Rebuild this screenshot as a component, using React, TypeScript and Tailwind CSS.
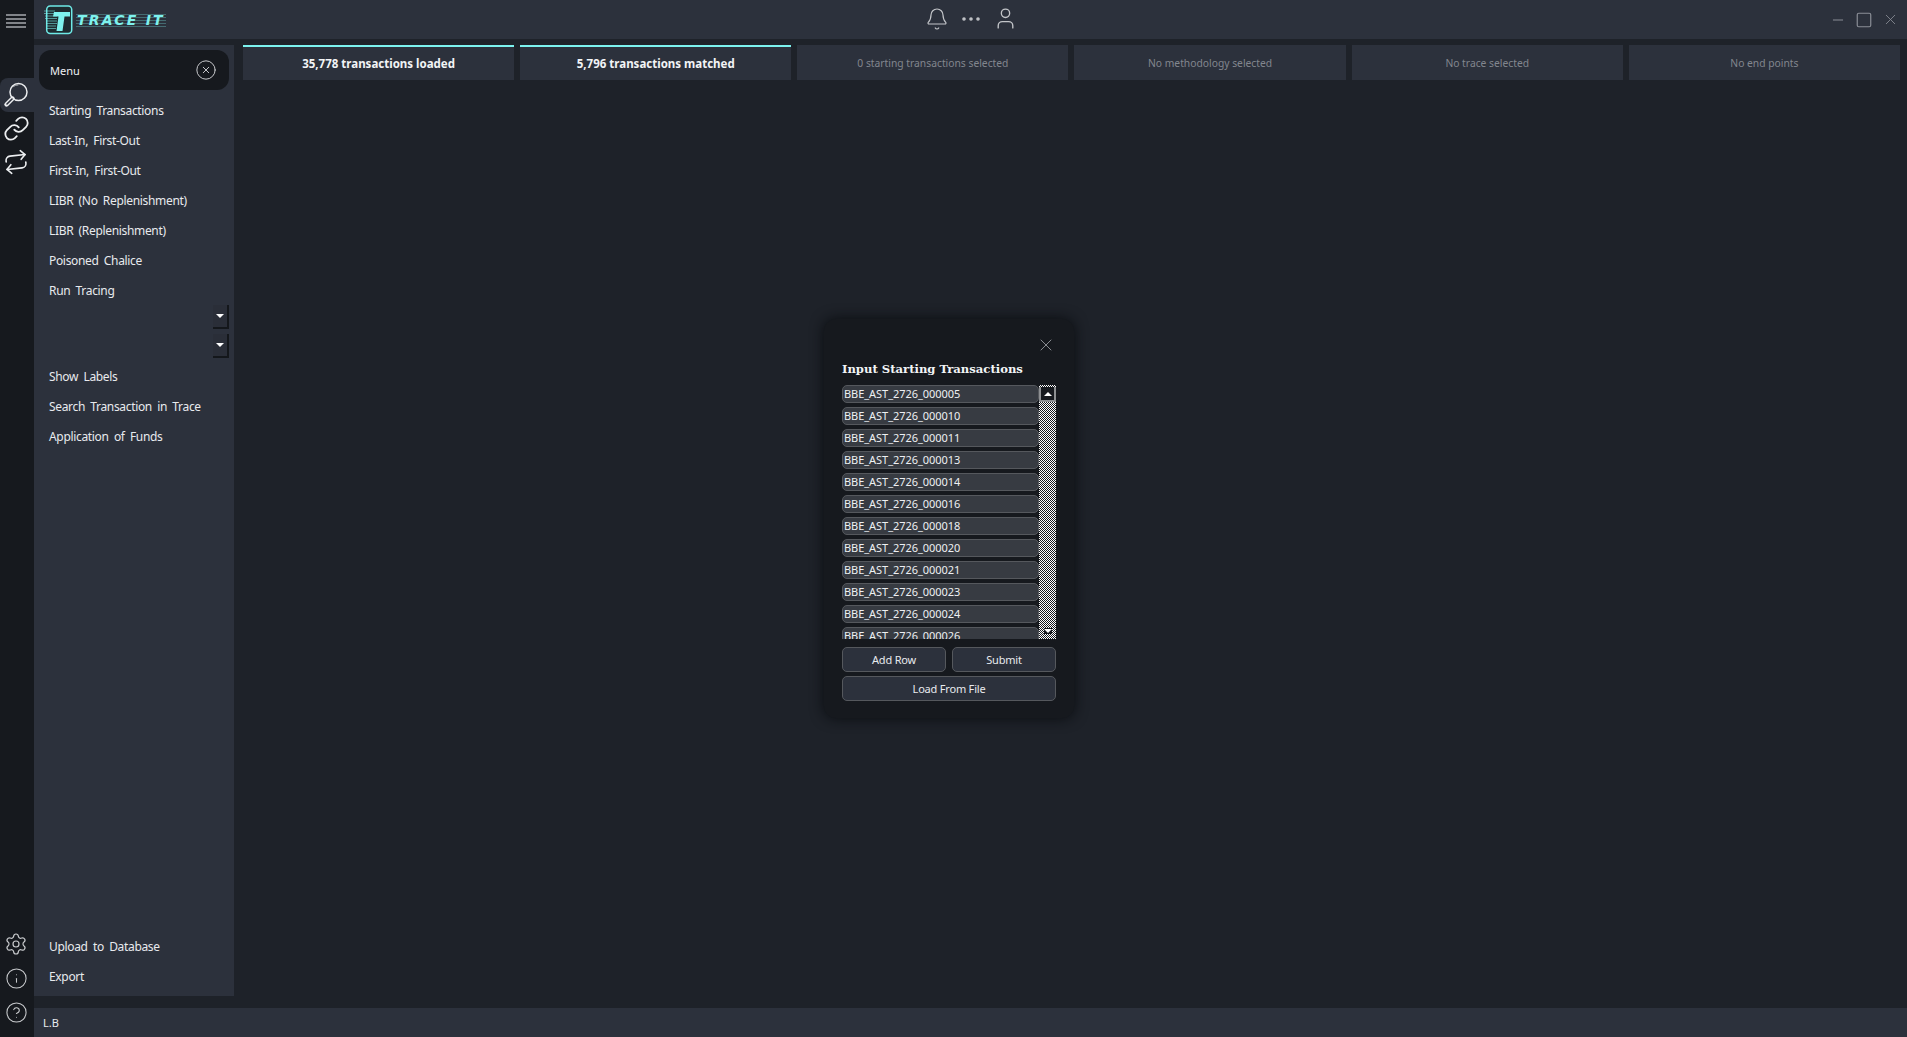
import React from "react";
import { Bell, Ellipsis, Link, Repeat, Settings, Info, CircleHelp, X, Minus, Square, User, CircleX } from "lucide-react";

const menuTop = ["Starting Transactions", "Last-In, First-Out", "First-In, First-Out", "LIBR (No Replenishment)", "LIBR (Replenishment)", "Poisoned Chalice", "Run Tracing"];
const menuMid = ["Show Labels", "Search Transaction in Trace", "Application of Funds"];
const tabs = [
  { t: "35,778 transactions loaded", on: true },
  { t: "5,796 transactions matched", on: true },
  { t: "0 starting transactions selected", on: false },
  { t: "No methodology selected", on: false },
  { t: "No trace selected", on: false },
  { t: "No end points", on: false },
];
const rows = ["000005", "000010", "000011", "000013", "000014", "000016", "000018", "000020", "000021", "000023", "000024", "000026"];

function MenuItem({ label }: { label: string }) {
  return <div className="h-[30px] flex items-center pl-[15px] text-[12px] tracking-[-0.33px] [word-spacing:2.5px] text-[#e8eaee]">{label}</div>;
}

function Drop() {
  return (
    <div className="w-[16px] h-[24px] bg-[#2a2e38] border-r-2 border-b-2 border-[#14171b] flex items-center justify-center">
      <div className="w-0 h-0 border-x-[4px] border-x-transparent border-t-[4px] border-t-white" />
    </div>
  );
}

function Logo() {
  return (
    <div className="flex items-center ml-[10px]">
      <svg width="30" height="30" viewBox="0 0 30 30" fill="none">
        <rect x="2.7" y="1" width="25" height="27.5" rx="3.5" stroke="#6ee9e6" strokeWidth="1.5" fill="#1e2b30" />
        <path d="M10 7H26V11.5H20.5L18.5 26H12.5L14.5 11.5H9Z" fill="#7ef2ee" />
        <path d="M0 6H11M0 8.5H12M1 11H13M1 13.5H13M2 16H13M2 18.5H13M3 21H12M3 23.5H12" stroke="#7ef2ee" strokeWidth="1" opacity="0.55" />
      </svg>
      <span className="ml-[2px] px-[1px] leading-[14px] text-[14px] font-bold italic tracking-[2.2px] text-[#7ef2ee] font-['DejaVu_Sans',sans-serif] bg-[repeating-linear-gradient(0deg,rgba(126,242,238,0.3)_0_1px,transparent_1px_3px)]">TRACE IT</span>
    </div>
  );
}

function Hamburger() {
  return (
    <svg width="20" height="14" viewBox="0 0 20 14" stroke="#a5a8ad" strokeWidth="1.6">
      <path d="M0 1H20M0 5H20M0 9H20M0 13H20" />
    </svg>
  );
}

function SearchIcon() {
  return (
    <svg width="26" height="26" viewBox="0 0 26 26" fill="none" strokeLinecap="round">
      <circle cx="15.5" cy="10" r="8.5" stroke="#eceef0" strokeWidth="1.5" />
      <path d="M10.5 4.5A7 7 0 0 1 15 3" stroke="#eceef0" strokeWidth="0.6" />
      <path d="M9.5 16.5L3.5 22.5" stroke="#eceef0" strokeWidth="4.4" />
      <path d="M9 17L4 22" stroke="#2c313c" strokeWidth="1.6" />
    </svg>
  );
}

const btn = "rounded-[5px] border border-[#55585d] bg-[#2c313c] flex items-center justify-center pt-[1px] text-[11px] tracking-[-0.2px] text-[#e8eaee]";

export default function App() {
  return (
    <div className="relative w-[1907px] h-[1037px] overflow-hidden flex bg-[#1e2229] font-['Noto_Sans',sans-serif]">
      {/* rail */}
      <div className="w-[34px] shrink-0 bg-[#16191e] flex flex-col items-stretch">
        <div className="h-[39px] flex items-center justify-center pr-[2px] pt-[3px]">
          <Hamburger />
        </div>
        <div className="mt-[39px] h-[34px] bg-[#2c313c] rounded-l-[8px] flex items-center justify-center pr-[2px]">
          <SearchIcon />
        </div>
        <div className="h-[33px] flex items-center justify-center pr-[2px]">
          <Link size={27} strokeWidth={1.6} className="text-[#eceef0]" />
        </div>
        <div className="h-[34px] flex items-center justify-center pr-[2px]">
          <Repeat size={26} strokeWidth={1.5} className="text-[#eceef0] -rotate-6" />
        </div>
        <div className="mt-auto flex flex-col items-center gap-[11px] pb-[13px] pr-[2px]">
          <Settings size={24} strokeWidth={1.2} className="text-[#c8cacd]" />
          <Info size={23} strokeWidth={1.1} className="text-[#c8cacd]" />
          <CircleHelp size={23} strokeWidth={1.1} className="text-[#c8cacd]" />
        </div>
      </div>

      <div className="flex-1 min-w-0 flex flex-col">
        {/* top bar */}
        <div className="h-[39px] shrink-0 bg-[#2c313c] relative flex items-center justify-between">
          <Logo />
          <div className="absolute left-[891px] top-[6px] flex items-center text-[#c3c5c9]">
            <Bell size={24} strokeWidth={1.2} />
            <Ellipsis size={24} strokeWidth={1.6} className="ml-[10px]" />
            <User size={25} strokeWidth={1.3} className="ml-[10px]" />
          </div>
          <div className="flex items-center gap-[9px] pr-[8px] text-[#8a8e96]">
            <Minus size={16} strokeWidth={1.5} />
            <Square size={18} strokeWidth={1.6} />
            <X size={17} strokeWidth={1.2} />
          </div>
        </div>

        <div className="flex-1 min-h-0 flex pt-[6px]">
          {/* sidebar */}
          <div className="w-[200px] shrink-0 bg-[#2c313c] flex flex-col pb-[4px] pl-[5px] pr-[5px]">
            <div className="h-[40px] mt-[5px] rounded-[12px] bg-[#16191e] flex items-center justify-between pl-[11px] pr-[12px] text-[11px] text-[#eef0f3]">
              <span className="pt-[2px]">Menu</span>
              <CircleX size={22} strokeWidth={1} className="text-[#d5d7da]" />
            </div>
            <div className="-ml-[5px] mt-[6px]">
              {menuTop.map((m) => <MenuItem key={m} label={m} />)}
            </div>
            <div className="flex flex-col items-end gap-[5px] mt-[-1px]">
              <Drop />
              <Drop />
            </div>
            <div className="-ml-[5px] mt-[4px]">
              {menuMid.map((m) => <MenuItem key={m} label={m} />)}
            </div>
            <div className="-ml-[5px] mt-auto">
              <MenuItem label="Upload to Database" />
              <MenuItem label="Export" />
            </div>
          </div>

          {/* main */}
          <div className="flex-1 min-w-0 pl-[9px] pr-[7px]">
            <div className="grid grid-cols-6 gap-x-[6px]">
              {tabs.map((x) => (
                <div key={x.t} className={"h-[35px] bg-[#2c313c] flex items-center justify-center " + (x.on ? "border-t-2 border-[#7cf2ee] text-[11.5px] font-bold text-[#f2f4f6]" : "pt-[2px] text-[10.3px] text-[#82868e]")}>
                  {x.t}
                </div>
              ))}
            </div>
          </div>
        </div>

        <div className="h-[12px] shrink-0" />
        {/* status bar */}
        <div className="h-[29px] shrink-0 bg-[#2c313c] flex items-center pl-[9px] pt-[2px] text-[11px] text-[#e8eaee]">L.B</div>
      </div>

      {/* dialog */}
      <div className="absolute left-[824px] top-[319px] w-[250px] h-[399px] rounded-[12px] bg-[#16191e] shadow-[0_0_14px_rgba(8,10,13,0.9)] px-[18px]">
        <div className="flex justify-end pt-[16px] h-[39px]">
          <X size={20} strokeWidth={1.2} className="text-[#8a8d92]" />
        </div>
        <div className="h-[27px] pb-[3px] flex items-center text-[11.6px] font-bold text-[#f2f4f6] font-['DejaVu_Serif',serif]">Input Starting Transactions</div>
        <div className="flex h-[254px] overflow-hidden">
          <div className="w-[197px] flex flex-col gap-[4px] overflow-hidden">
            {rows.map((r) => (
              <div key={r} className="h-[18px] shrink-0 rounded-[5px] border border-[#55585d] bg-[#373b42] flex items-center pl-[1px] pt-[1px] text-[11px] tracking-[-0.05px] text-[#eef0f3]">
                BBE_AST_2726_{r}
              </div>
            ))}
          </div>
          <div className="w-[17px] flex flex-col justify-between bg-[repeating-conic-gradient(#ffffff_0_25%,#16191e_0_50%)] bg-[length:2px_2px]">
            <div className="mt-[2px] h-[15px] bg-[#16191e] border-x-2 border-b-2 border-[#8d8f92] flex items-center justify-center">
              <div className="w-0 h-0 border-x-[4px] border-x-transparent border-b-[4px] border-b-white" />
            </div>
            <div className="h-[16px] flex items-center justify-center">
              <div className="w-[8px] h-[6px] bg-[#16191e] flex items-center justify-center">
                <div className="w-0 h-0 border-x-[4px] border-x-transparent border-t-[4px] border-t-white" />
              </div>
            </div>
          </div>
        </div>
        <div className="mt-[8px] flex gap-[6px]">
          <div className={"flex-1 h-[25px] " + btn}>Add Row</div>
          <div className={"flex-1 h-[25px] " + btn}>Submit</div>
        </div>
        <div className={"mt-[4px] h-[25px] " + btn}>Load From File</div>
      </div>
    </div>
  );
}
